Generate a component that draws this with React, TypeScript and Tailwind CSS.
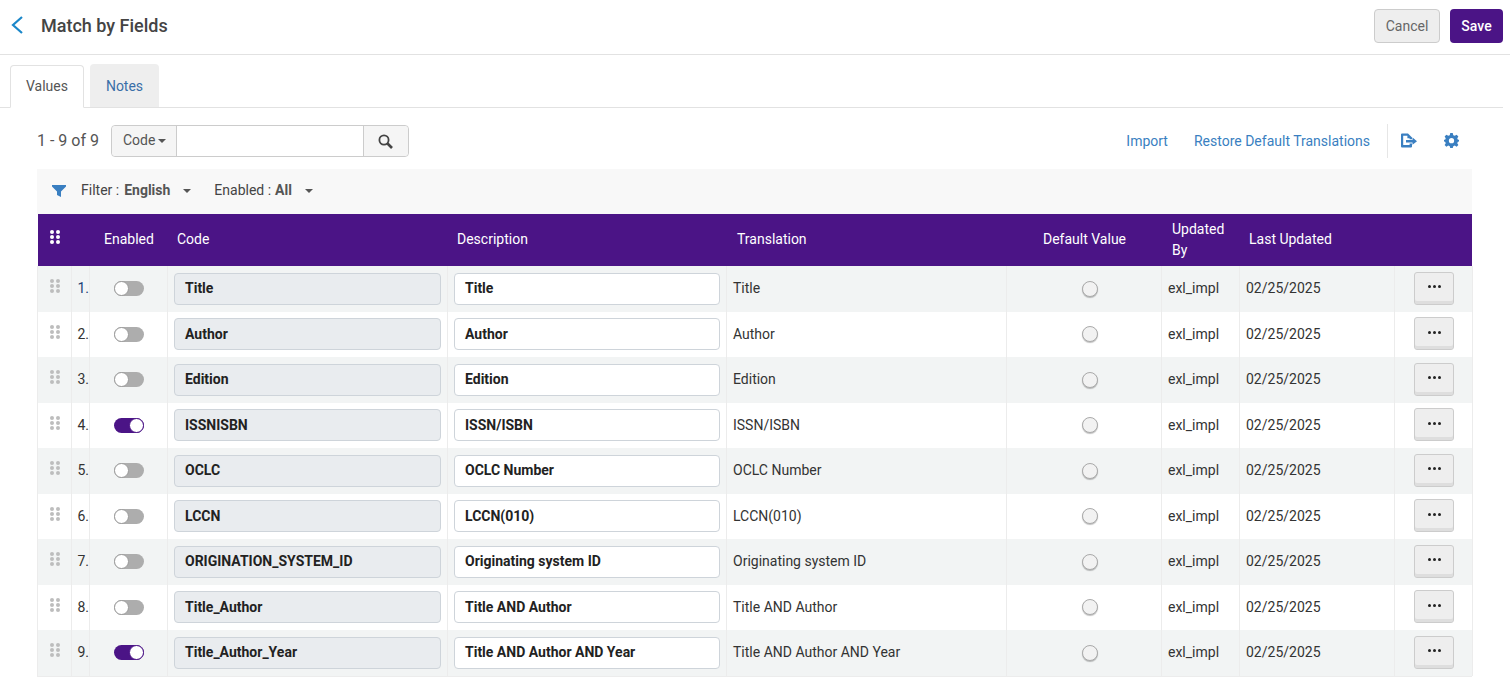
import React from "react";

const rows = [
  ["Title", "Title", false],
  ["Author", "Author", false],
  ["Edition", "Edition", false],
  ["ISSNISBN", "ISSN/ISBN", true],
  ["OCLC", "OCLC Number", false],
  ["LCCN", "LCCN(010)", false],
  ["ORIGINATION_SYSTEM_ID", "Originating system ID", false],
  ["Title_Author", "Title AND Author", false],
  ["Title_Author_Year", "Title AND Author AND Year", true],
] as [string, string, boolean][];

function Dots({ className }: { className: string }) {
  return (
    <svg width="10" height="14" viewBox="0 0 10 14" className={className} fill="currentColor">
      {[2, 7, 12].map((y) => (
        <g key={y}>
          <circle cx="2" cy={y} r="2" />
          <circle cx="8" cy={y} r="2" />
        </g>
      ))}
    </svg>
  );
}

function Caret({ className = "" }: { className?: string }) {
  return <span className={`inline-block w-0 h-0 border-x-[4px] border-x-transparent border-t-[4px] border-t-[#555] ${className}`} />;
}

function Toggle({ on }: { on: boolean }) {
  return (
    <div className={`w-[30px] h-[15px] rounded-full flex items-center ${on ? "bg-[#4b1486] justify-end" : "bg-[#adadad] justify-start"}`}>
      <div className={`w-[15px] h-[15px] rounded-full bg-white border ${on ? "border-[#4b1486]" : "border-[#9a9a9a]"}`} />
    </div>
  );
}

function Row({ row, index }: { row: [string, string, boolean]; index: number }) {
  const [code, desc, on] = row;
  const bg = index % 2 === 0 ? "bg-[#f2f4f4]" : "bg-white";
  const cell = "h-full border-r border-[#ececec] flex items-center shrink-0";
  return (
    <div className={`flex h-[45.5px] text-[14px] text-[#333] ${bg}`}>
      <div className={`${cell} w-[35px] border-l pl-[12px] items-start pt-[13px]`}>
        <Dots className="text-[#bdbdbd]" />
      </div>
      <div className={`${cell} w-[18px] justify-end text-[14px] ${index === 0 ? "text-[#1c3f77]" : ""}`}>{index + 1}.</div>
      <div className={`${cell} w-[78px] pl-[24px]`}>
        <Toggle on={on} />
      </div>
      <div className={`${cell} w-[280px] pl-[6px]`}>
        <div className="w-[267px] h-[32px] rounded-[4px] bg-[#e9ecef] border border-[#ced4da] flex items-center pl-[10px] font-bold text-[#222]">{code}</div>
      </div>
      <div className={`${cell} w-[279px] pl-[6px]`}>
        <div className="w-[266px] h-[32px] rounded-[4px] bg-white border border-[#ced4da] flex items-center pl-[10px] font-bold text-[#222]">{desc}</div>
      </div>
      <div className={`${cell} w-[280px] pl-[6px]`}>{desc}</div>
      <div className={`${cell} w-[155px] justify-center pl-[12px]`}>
        <div className="w-[16px] h-[16px] rounded-full bg-[#f2f2f2] border border-[#aaaaaa] shadow-[0_1px_1px_rgba(0,0,0,0.25)]" />
      </div>
      <div className={`${cell} w-[78px] pl-[6px]`}>exl_impl</div>
      <div className={`${cell} w-[155px] pl-[6px]`}>02/25/2025</div>
      <div className={`${cell} w-[78px] pl-[19px]`}>
        <div className="w-[40px] h-[33px] -mt-[1px] rounded-[3px] bg-[#eeeeee] border border-[#cccccc] shadow-[inset_0_-3px_0_#dedede] flex items-center justify-center gap-[2px] pb-[3px]">
          {[0, 1, 2].map((i) => (
            <span key={i} className="w-[3px] h-[3px] rounded-full bg-[#222]" />
          ))}
        </div>
      </div>
    </div>
  );
}

export default function App() {
  return (
    <div className="w-[1510px] h-[694px] bg-white overflow-hidden text-[14px] text-[#333]" style={{ fontFamily: "Roboto, sans-serif" }}>
      <div className="h-[55px] border-b border-[#e2e2e2] flex items-center pl-[9px] pr-[7px]">
        <svg width="16" height="20" viewBox="0 0 16 20" fill="none" stroke="#1b87c9" strokeWidth="2.2" className="mr-[16px] -mt-[4px]">
          <path d="M13 2 L4 10 L13 18" />
        </svg>
        <div className="text-[18px] font-medium text-[#444] -mt-[3px]">Match by Fields</div>
        <div className="ml-auto flex gap-[10px] -mt-[2px]">
          <div className="w-[66px] h-[34px] rounded-[4px] bg-[#eeeeee] border border-[#cccccc] flex items-center justify-center text-[#666]">Cancel</div>
          <div className="w-[53px] h-[34px] rounded-[4px] bg-[#4b1486] flex items-center justify-center text-white font-medium">Save</div>
        </div>
      </div>

      <div className="h-[53px] flex items-end pl-[10px] mr-[7px] border-b border-[#e2e2e2]">
        <div className="w-[74px] h-[43px] -mb-px bg-white border border-[#e2e2e2] border-b-white rounded-t-[4px] flex items-center justify-center text-[#555]">Values</div>
        <div className="w-[69px] h-[43px] ml-[6px] pt-[2px] bg-[#eeeeee] rounded-t-[4px] flex items-center justify-center text-[#3a6ea8]">Notes</div>
      </div>

      <div className="pl-[37px] pr-[38px]">
        <div className="h-[61px] flex items-center pt-[4px]">
          <div className="text-[16px] text-[#555] w-[74px]">1 - 9 of 9</div>
          <div className="flex h-[32px] w-[298px] border border-[#cccccc] rounded-[4px]">
            <div className="w-[65px] bg-[#f5f5f5] border-r border-[#cccccc] flex items-center pl-[11px] gap-[3px] text-[#555] rounded-l-[4px]">
              Code <Caret />
            </div>
            <div className="flex-1 bg-white" />
            <div className="w-[45px] bg-[#f5f5f5] border-l border-[#cccccc] flex items-center justify-center rounded-r-[4px]">
              <svg width="15" height="15" viewBox="0 0 15 15" fill="none" stroke="#444" strokeWidth="1.8" className="mt-[2px] -ml-[2px]">
                <circle cx="6" cy="6" r="4.6" />
                <path d="M9.5 9.5 L14 14" strokeWidth="2.6" />
              </svg>
            </div>
          </div>
          <div className="ml-auto flex items-center text-[#3a7fc1]">
            <span className="mt-[2px]">Import</span>
            <span className="ml-[26px] mr-[17px] mt-[2px]">Restore Default Translations</span>
            <div className="h-[34px] border-l border-[#e6e6e6] flex items-center pl-[12px] pr-[21px]">
              <svg width="17" height="15" viewBox="0 0 17 15" fill="#3a7fc1">
                <path d="M1 1.5 Q1 0.5 2 0.5 H8 L12 4.5 V6.2 H9.6 V5.2 H7.4 V2.8 H3.2 V12 H9.6 V10.6 H12 V13.5 Q12 14.5 11 14.5 H2 Q1 14.5 1 13.5 Z" />
                <path d="M6 7 H12.5 V4.5 L17 8.2 L12.5 11.8 V9.4 H6 Z" />
              </svg>
            </div>
            <svg width="15" height="15" viewBox="0 0 24 24" fill="#3a7fc1" fillRule="evenodd" className="ml-[6px] mr-[13px]">
              <path d="M10 0 H14 L14.8 3.4 L17.2 4.4 L20.2 2.6 L23 5.4 L21.2 8.4 L22.2 10.6 L24 10.8 V13.6 L22.2 14 L21.2 16.4 L23 19 L20.2 21.8 L17.2 20 L14.8 21 L14 24 H10 L9.2 21 L6.8 20 L3.8 21.8 L1 19 L2.8 16.4 L1.8 14 L0 13.6 V10.8 L1.8 10.6 L2.8 8.4 L1 5.4 L3.8 2.6 L6.8 4.4 L9.2 3.4 Z M12 8 A4.2 4.2 0 1 0 12 16.4 A4.2 4.2 0 1 0 12 8 Z" />
            </svg>
          </div>
        </div>

        <div className="h-[45px] bg-[#f8f8f8] flex items-center pl-[15px] pb-[2px] text-[#444]">
          <svg width="14" height="12" viewBox="0 0 14 12" fill="#3a7fc1">
            <path d="M0 0 H14 V1.5 L9 6.5 V12 L5 10 V6.5 L0 1.5 Z" />
          </svg>
          <span className="ml-[15px]">Filter :</span>
          <span className="ml-[5px] font-bold text-[#555]">English</span>
          <Caret className="ml-[13px]" />
          <span className="ml-[23px]">Enabled :</span>
          <span className="ml-[4px] font-bold text-[#555]">All</span>
          <Caret className="ml-[13px]" />
        </div>

        <div className="h-[52px] ml-[1px] bg-[#4b1486] text-white flex items-center pb-[2px]">
          <div className="w-[52px] pl-[12px] pb-[4px]">
            <Dots className="text-white" />
          </div>
          <div className="w-[78px] pl-[14px]">Enabled</div>
          <div className="w-[280px] pl-[9px]">Code</div>
          <div className="w-[280px] pl-[9px]">Description</div>
          <div className="w-[279px] pl-[9px]">Translation</div>
          <div className="w-[155px] pl-[36px]">Default Value</div>
          <div className="w-[78px] pl-[10px] leading-[21px] pt-[2px]">Updated<br />By</div>
          <div className="w-[155px] pl-[9px]">Last Updated</div>
        </div>

        <div className="border-b border-[#ececec]">
          {rows.map((r, i) => (
            <Row key={r[0]} row={r} index={i} />
          ))}
        </div>
      </div>
    </div>
  );
}
